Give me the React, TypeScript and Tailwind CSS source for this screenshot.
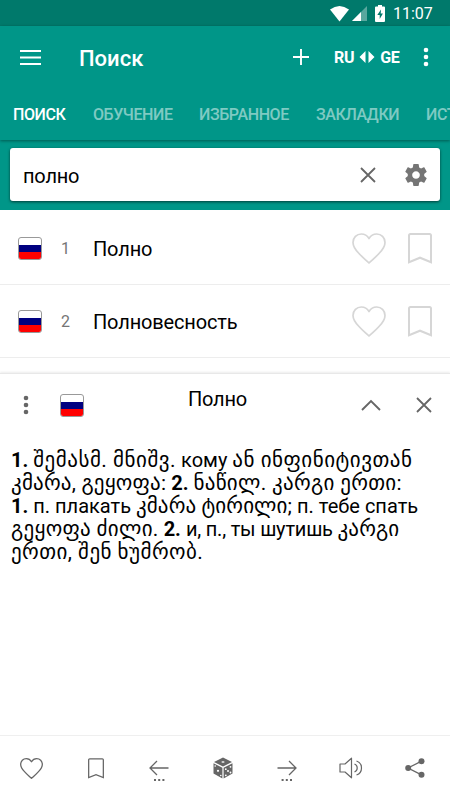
import { FC, ReactNode } from "react";

type Entry = { id: number; word: string };

const tabs = [
    { label: "ПОИСК", width: "w-[54px]" },
    { label: "ОБУЧЕНИЕ", width: "w-[80px]" },
    { label: "ИЗБРАННОЕ", width: "w-[91px]" },
    { label: "ЗАКЛАДКИ", width: "w-[84px]" },
    { label: "ИСТОРИЯ", width: "w-[70px]" },
];

const entries: Entry[] = [
    { id: 1, word: "Полно" },
    { id: 2, word: "Полновесность" },
];

const Flag: FC = () => (
    <div className="flex h-[23px] w-[24px] shrink-0 flex-col overflow-hidden rounded-[3px] border border-[#999] bg-white">
        <div className="h-[7px]" />
        <div className="h-[7px] bg-[#000080]" />
        <div className="h-[7px] bg-[#ff0000]" />
    </div>
);

const Heart: FC<{ className: string; stroke: number }> = ({ className, stroke }) => (
    <svg viewBox="0 0 34 31" className={className} fill="none" stroke="currentColor" strokeWidth={stroke} strokeLinejoin="round">
        <path d="M17 30C14 27 11 25 7 20.500C3 16.500 1 13.500 1 9.500C1 4.500 4.700 1 9.300 1C12.500 1 15.300 2.600 17 5.500C18.700 2.600 21.500 1 24.700 1C29.300 1 33 4.500 33 9.500C33 13.500 31 16.500 27 20.500C23 25 20 27 17 30Z" />
    </svg>
);

const Bookmark: FC<{ className: string; stroke: number }> = ({ className, stroke }) => (
    <svg viewBox="0 0 24 31" className={className} fill="none" stroke="currentColor" strokeWidth={stroke}>
        <path d="M1 29.200V2.500Q1 1 2.500 1H21.500Q23 1 23 2.500V29.200L12 24.700Z" />
    </svg>
);

const Cross: FC<{ className: string }> = ({ className }) => (
    <svg viewBox="0 0 16 16" className={className} fill="none" stroke="currentColor" strokeWidth="1.800">
        <path d="M1 1L15 15M15 1L1 15" />
    </svg>
);

const Dots: FC<{ className: string }> = ({ className }) => (
    <svg viewBox="0 0 6 20" className={className} fill="currentColor">
        <circle cx="3" cy="3" r="2.300" />
        <circle cx="3" cy="10" r="2.300" />
        <circle cx="3" cy="17" r="2.300" />
    </svg>
);

const Arrow: FC<{ className?: string }> = ({ className }) => (
    <svg viewBox="0 0 20 28" className={`h-[28px] w-[20px] ${className ?? ""}`} fill="none" stroke="currentColor" strokeWidth="1.300">
        <path d="M19.500 14H1M8 7L1 14L8 21" />
        <path d="M5 26H7M9.200 26H11.200M13.400 26H15.400" strokeWidth="1.800" />
    </svg>
);

const Dice: FC = () => (
    <svg viewBox="0 0 20 22" className="h-[22px] w-[20px]">
        <path d="M10 0.500L19 5L10 9.500L1 5Z" fill="#666" />
        <path d="M0.500 6.300L9.400 10.700V21.500L0.500 16.500Z" fill="#666" />
        <path d="M19.500 6.300L10.600 10.700V21.500L19.500 16.500Z" fill="#666" />
        <g fill="#fff">
            <ellipse cx="10" cy="5" rx="1.600" ry="0.800" />
            <circle cx="2.200" cy="9" r="0.800" />
            <circle cx="5" cy="13.800" r="1.100" />
            <circle cx="7.800" cy="18.500" r="0.800" />
            <circle cx="12.800" cy="12.200" r="0.900" />
            <circle cx="17.500" cy="9.800" r="0.900" />
            <circle cx="15" cy="13.900" r="1" />
            <circle cx="12.800" cy="18.300" r="0.900" />
            <circle cx="17.500" cy="15.500" r="0.900" />
        </g>
    </svg>
);

const Speaker: FC = () => (
    <svg viewBox="0 0 24 22" className="ml-[2px] h-[22px] w-[24px]" fill="none" stroke="currentColor" strokeWidth="1.200" strokeLinejoin="round">
        <path d="M1 7H6L12.500 1.200V20.800L6 15H1Z" />
        <path d="M15.500 7A4.300 4.300 0 0 1 15.500 15M17.500 4A7.400 7.400 0 0 1 17.500 18" />
    </svg>
);

const Share: FC = () => (
    <svg viewBox="0 0 20 20" className="ml-px h-[20px] w-[20px]" fill="currentColor">
        <path d="M16.500 3.200L3 10L16.500 16.800" fill="none" stroke="currentColor" strokeWidth="1.300" />
        <circle cx="16.500" cy="3.200" r="3" />
        <circle cx="3.200" cy="10" r="3" />
        <circle cx="16.500" cy="16.800" r="3" />
    </svg>
);

const StatusBar: FC = () => (
    <div className="flex h-[26px] items-center bg-[#00796b] pl-[330px] text-white">
        <svg viewBox="0 0 19 16" className="mt-px h-[16px] w-[19px]" fill="currentColor">
            <path d="M0 3.500Q9.500 -3.500 19 3.500L9.500 15.500Z" />
        </svg>
        <svg viewBox="0 0 15 15" className="ml-[3px] mt-px h-[15px] w-[15px]" fill="currentColor">
            <path d="M15 0V15H0Z" opacity="0.35" />
            <path d="M9 6V15H0Z" />
        </svg>
        <svg viewBox="0 0 10 17" className="ml-[8px] h-[17px] w-[10px]">
            <path d="M3 0H7V1.500H9Q10 1.500 10 2.500V16Q10 17 9 17H1Q0 17 0 16V2.500Q0 1.500 1 1.500H3Z" fill="#fff" />
            <path d="M6 4.500L2.300 10H4.700V14L7.900 8.500H5.700Z" fill="#00796b" />
        </svg>
        <span className="ml-[8px] mt-[2px] text-[16px] leading-none">11:07</span>
    </div>
);

const EntryRow: FC<{ entry: Entry }> = ({ entry }) => (
    <div className="flex h-[73px] items-center border-b border-[#ededed] pl-[18px] pr-[18px]">
        <Flag />
        <span className="w-[51px] pl-[19px] pt-[2px] text-[16px] text-[#757575]">{entry.id}</span>
        <span className="flex-1 pt-[2px] text-[20px] tracking-[-0.15px] text-black">{entry.word}</span>
        <Heart className="h-[31px] w-[34px] text-[#d6d6d6]" stroke={1.7} />
        <Bookmark className="ml-[22px] h-[31px] w-[24px] text-[#d6d6d6]" stroke={2} />
    </div>
);

// Georgian runs are set slightly larger than the Cyrillic around them
const Ka: FC<{ tracking: string; children: ReactNode }> = ({ tracking, children }) => (
    <span className={`text-[21px] leading-none ${tracking}`}>{children}</span>
);

export default function App() {
    return (
        <div className="flex h-[800px] w-[450px] flex-col overflow-hidden bg-white font-[Roboto,'DejaVu_Sans',sans-serif]">
            <StatusBar />
            <header className="relative z-10 h-[114px] shrink-0 bg-[#009688] text-white shadow-[0_1px_3px_rgba(0,0,0,0.4)]">
                <div className="flex h-[62px] items-center pl-[20px] pr-[21px]">
                    <svg viewBox="0 0 21 15" className="h-[15px] w-[21px]" fill="currentColor">
                        <path d="M0 0H21V2H0ZM0 6.500H21V8.500H0ZM0 13H21V15H0Z" />
                    </svg>
                    <h1 className="ml-[38px] mt-[2px] flex-1 text-[22px] font-medium">Поиск</h1>
                    <svg viewBox="0 0 16 16" className="h-[16px] w-[16px]" stroke="currentColor" strokeWidth="1.900">
                        <path d="M8 0V16M0 8H16" />
                    </svg>
                    <span className="ml-[25px] mt-[2px] text-[16px] font-bold tracking-[-0.300px]">RU</span>
                    <svg viewBox="0 0 16 12" className="mx-[5px] h-[12px] w-[16px]" fill="currentColor">
                        <path d="M6.500 0V12L0.500 6ZM9.500 0V12L15.500 6Z" />
                    </svg>
                    <span className="mt-[2px] text-[16px] font-bold tracking-[-0.300px]">GE</span>
                    <Dots className="ml-[23.500px] h-[20px] w-[6px]" />
                </div>
                <nav className="flex h-[52px] items-center gap-[26px] overflow-hidden pl-[13px] pt-[2px] text-[16px] font-medium tracking-[-0.400px]">
                    {tabs.map((tab, i) => (
                        <span key={tab.label} className={`${tab.width} shrink-0 whitespace-nowrap ${i === 0 ? "text-white" : "text-white/50"}`}>
                            {tab.label}
                        </span>
                    ))}
                </nav>
            </header>
            <section className="h-[70px] shrink-0 bg-[#009688] px-[10px] pt-[8px]">
                <div className="flex h-[53px] items-center rounded-[3px] bg-white pl-[13px] pr-[13px] text-[#666] shadow-[0_1px_3px_rgba(0,0,0,0.6)]">
                    <span className="flex-1 pt-[2px] text-[20px] tracking-[-0.2px] text-black">полно</span>
                    <Cross className="h-[16px] w-[16px]" />
                    <svg viewBox="2 2 20 20" className="ml-[29px] h-[22px] w-[22px]" fill="#757575">
                        <path d="M19.430 12.980c.04-.32.07-.64.07-.98s-.03-.66-.07-.98l2.110-1.650c.19-.15.24-.42.12-.64l-2-3.460c-.12-.22-.39-.3-.61-.22l-2.490 1c-.52-.4-1.080-.73-1.690-.98l-.38-2.650C14.460 2.180 14.250 2 14 2h-4c-.25 0-.46.18-.49.42l-.38 2.650c-.61.25-1.170.59-1.690.98l-2.490-1c-.23-.09-.49 0-.61.22l-2 3.460c-.13.22-.07.49.12.64l2.110 1.650c-.04.32-.07.65-.07.98s.03.66.07.98l-2.110 1.650c-.19.15-.24.42-.12.64l2 3.460c.12.22.39.3.61.22l2.490-1c.52.4 1.080.73 1.690.98l.38 2.650c.03.24.24.42.49.42h4c.25 0 .46-.18.49-.42l.38-2.650c.61-.25 1.170-.59 1.690-.98l2.490 1c.23.09.49 0 .61-.22l2-3.460c.12-.22.07-.49-.12-.64l-2.110-1.650zM12 15.500c-1.930 0-3.500-1.570-3.500-3.500s1.570-3.500 3.500-3.500 3.500 1.570 3.500 3.500-1.570 3.500-3.500 3.500z" />
                    </svg>
                </div>
            </section>
            <section className="h-[163px] shrink-0 pt-[2px]">
                {entries.map((entry) => (
                    <EntryRow key={entry.id} entry={entry} />
                ))}
            </section>
            <section className="flex-1 border-t border-[#e8e8e8] shadow-[0_-1px_2px_rgba(0,0,0,0.08)]">
                <div className="flex h-[62px] items-center pl-[23px] pr-[18px] text-[#666]">
                    <Dots className="h-[20px] w-[6px]" />
                    <div className="ml-[31px]">
                        <Flag />
                    </div>
                    <h2 className="mb-[12px] ml-[104px] flex-1 text-[20px] tracking-[-0.2px] text-black">Полно</h2>
                    <svg viewBox="0 0 20 12" className="h-[12px] w-[20px]" fill="none" stroke="currentColor" strokeWidth="1.900">
                        <path d="M1 11L10 2L19 11" />
                    </svg>
                    <Cross className="ml-[35px] h-[16px] w-[16px]" />
                </div>
                <div className="whitespace-nowrap pl-[11px] pt-[13px] text-[20px] leading-[23px] text-black">
                    <p><b>1.</b> <Ka tracking="tracking-[0.500px]">შემასმ. მნიშვ.</Ka> кому <Ka tracking="tracking-[0.500px]">ან ინფინიტივთან</Ka></p>
                    <p><Ka tracking="tracking-[0.200px]">კმარა, გეყოფა:</Ka> <b>2.</b> <Ka tracking="tracking-[0.300px]">ნაწილ. კარგი ერთი:</Ka></p>
                    <p><b>1.</b> п. плакать <Ka tracking="tracking-[0.100px]">კმარა ტირილი;</Ka> п. тебе спать</p>
                    <p><Ka tracking="tracking-[0.300px]">გეყოფა ძილი.</Ka> <b>2.</b> <span className="tracking-[-0.2px]">и, п., ты шутишь </span><Ka tracking="tracking-[0.100px]">კარგი</Ka></p>
                    <p><Ka tracking="tracking-[0.450px]">ერთი, შენ ხუმრობ.</Ka></p>
                </div>
            </section>
            <footer className="grid h-[65px] shrink-0 grid-cols-7 place-items-center border-t border-[#efefef] pr-[4px] text-[#666]">
                <Heart className="h-[21px] w-[23px]" stroke={1.9} />
                <Bookmark className="h-[21px] w-[16px]" stroke={1.9} />
                <Arrow />
                <Dice />
                <Arrow className="-scale-x-100" />
                <Speaker />
                <Share />
            </footer>
        </div>
    );
}
